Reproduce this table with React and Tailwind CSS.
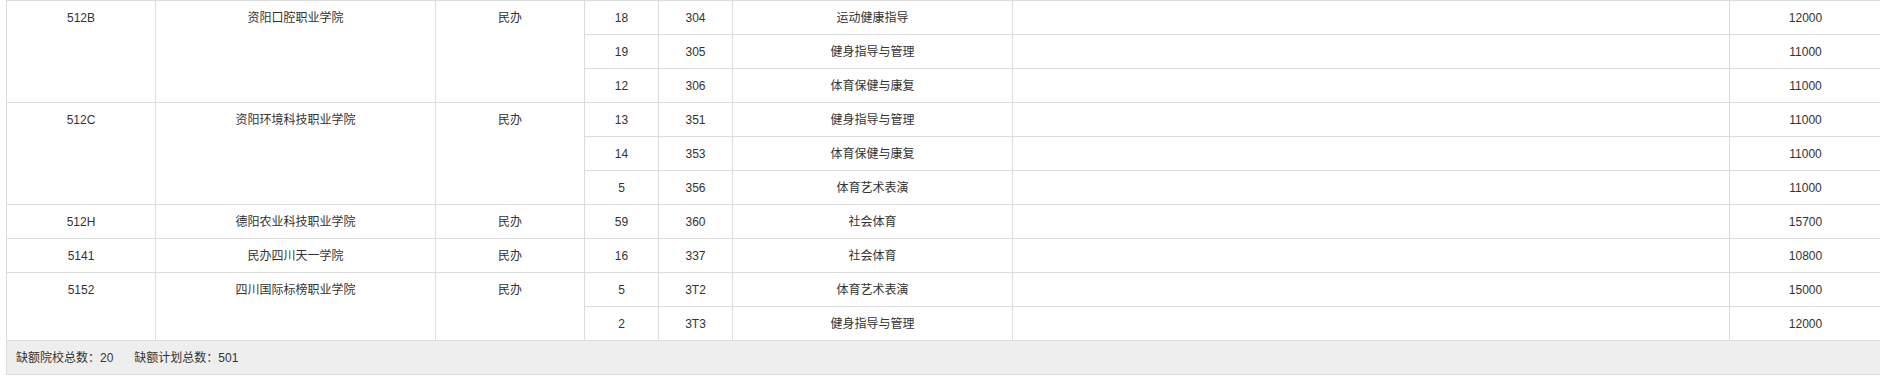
const GROUPS = [
  {
    code: '512B',
    name: '资阳口腔职业学院',
    type: '民办',
    majors: [
      { plan: '18', id: '304', title: '运动健康指导', fee: '12000' },
      { plan: '19', id: '305', title: '健身指导与管理', fee: '11000' },
      { plan: '12', id: '306', title: '体育保健与康复', fee: '11000' },
    ],
  },
  {
    code: '512C',
    name: '资阳环境科技职业学院',
    type: '民办',
    majors: [
      { plan: '13', id: '351', title: '健身指导与管理', fee: '11000' },
      { plan: '14', id: '353', title: '体育保健与康复', fee: '11000' },
      { plan: '5', id: '356', title: '体育艺术表演', fee: '11000' },
    ],
  },
  {
    code: '512H',
    name: '德阳农业科技职业学院',
    type: '民办',
    majors: [{ plan: '59', id: '360', title: '社会体育', fee: '15700' }],
  },
  {
    code: '5141',
    name: '民办四川天一学院',
    type: '民办',
    majors: [{ plan: '16', id: '337', title: '社会体育', fee: '10800' }],
  },
  {
    code: '5152',
    name: '四川国际标榜职业学院',
    type: '民办',
    majors: [
      { plan: '5', id: '3T2', title: '体育艺术表演', fee: '15000' },
      { plan: '2', id: '3T3', title: '健身指导与管理', fee: '12000' },
    ],
  },
];

const cell = 'border border-[#ddd] px-2 pt-[7px] pb-[6px] leading-[20px] text-center align-top';

export default function App() {
  return (
    <div
      className="w-[1880px] h-[381px] overflow-hidden bg-white pl-[6px] text-[12px] text-[#333]"
      style={{ fontFamily: '"Liberation Sans", Arial, "Noto Sans CJK SC", sans-serif' }}
    >
      <table className="w-[1875px] table-fixed border-collapse">
        <colgroup>
          <col className="w-[149px]" />
          <col className="w-[280px]" />
          <col className="w-[149px]" />
          <col className="w-[74px]" />
          <col className="w-[74px]" />
          <col className="w-[280px]" />
          <col className="w-[717px]" />
          <col className="w-[152px]" />
        </colgroup>
        <tbody>
          {GROUPS.map((g) =>
            g.majors.map((m, i) => (
              <tr key={g.code + m.id}>
                {i === 0 && (
                  <>
                    <td rowSpan={g.majors.length} className={cell}>{g.code}</td>
                    <td rowSpan={g.majors.length} className={cell}>{g.name}</td>
                    <td rowSpan={g.majors.length} className={cell}>{g.type}</td>
                  </>
                )}
                <td className={cell}>{m.plan}</td>
                <td className={cell}>{m.id}</td>
                <td className={cell}>{m.title}</td>
                <td className={cell}></td>
                <td className={cell}>{m.fee}</td>
              </tr>
            ))
          )}
        </tbody>
      </table>
      <div className="w-[1875px] border border-t-0 border-[#ddd] bg-[#eee] pl-[9px] pt-[7px] pb-[6px] leading-[20px]">
        <span>缺额院校总数：20</span>
        <span className="ml-[21px]">缺额计划总数：501</span>
      </div>
    </div>
  );
}
